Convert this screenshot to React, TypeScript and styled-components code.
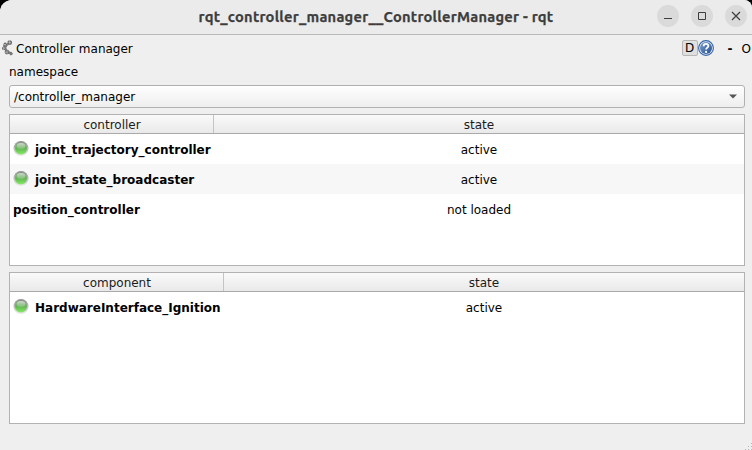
import React from "react";
import styled, { createGlobalStyle } from "styled-components";

const GlobalStyle = createGlobalStyle`
  *, *::before, *::after { box-sizing: border-box; }
  html, body { margin: 0; height: 450px; overflow: hidden; background: #000; }
`;

const Window = styled.div`
  display: flex;
  flex-direction: column;
  width: 752px;
  height: 450px;
  overflow: hidden;
  border-radius: 12px 8px 0 0;
  background: #efefef;
  color: #000;
  font: 12px/14px "DejaVu Sans", sans-serif;
  white-space: nowrap;
`;

const TitleBar = styled.header`
  display: grid;
  grid-template-columns: 1fr 356px 1fr;
  align-items: center;
  height: 35px;
  flex: none;
  background: #ebebeb;
  border-bottom: 1px solid #b9bab7;
`;

const WindowTitle = styled.h1`
  grid-column: 2;
  margin: 0;
  color: #3d3d3d;
  font: 700 14.67px/20px Ubuntu, "Noto Sans", sans-serif;
  letter-spacing: 0.24px;
  text-align: center;
  -webkit-text-stroke: 0.25px #3d3d3d;
`;

const WindowButtons = styled.div`
  display: flex;
  justify-content: flex-end;
  gap: 12px;
  padding: 0 5px 2px 0;
`;

const RoundButton = styled.button`
  display: grid;
  place-items: center;
  width: 22px;
  height: 22px;
  padding: 0;
  border: 0;
  border-radius: 50%;
  background: #dadada;
`;

const DockBar = styled.div`
  display: flex;
  align-items: center;
  height: 26px;
  flex: none;
  padding: 0 1px;
`;

const DockTitle = styled.span`
  flex: 1;
  padding: 1px 0 0 2px;
`;

const DockButton = styled.button`
  width: 16px;
  height: 16px;
  padding: 0;
  border: 1px solid #b6b6b6;
  border-radius: 2px;
  background: linear-gradient(#e2e2e2, #dedede);
  color: #000;
  font: 12px/14px "DejaVu Sans", sans-serif;
`;

const FlatButton = styled.span<{ $gap: number; $bold?: boolean }>`
  margin-left: ${(p) => p.$gap}px;
  padding-top: 1px;
  font-weight: ${(p) => (p.$bold ? 700 : 400)};
`;

const Content = styled.main`
  display: flex;
  flex-direction: column;
  padding: 4px 7px 0 9px;
`;

const Label = styled.label`
  height: 20px;
`;

const ComboBox = styled.div`
  display: flex;
  align-items: center;
  justify-content: space-between;
  height: 23px;
  padding: 0 7px 0 4px;
  border: 1px solid #b1b1b1;
  border-radius: 3px;
  background: linear-gradient(#fefefe, #eeeeee);
`;

const Table = styled.section<{ $first: number; $gap: number }>`
  --columns: ${(p) => p.$first}px 1fr;
  height: 152px;
  margin-top: ${(p) => p.$gap}px;
  border: 1px solid #b2b2b2;
  background: #fff;
`;

const HeaderRow = styled.div`
  display: grid;
  grid-template-columns: var(--columns);
  height: 19px;
  border-bottom: 1px solid #aaaaaa;
  background: linear-gradient(#fafafa, #e9e9e9);
  color: #1b1b1b;
`;

const HeaderCell = styled.div`
  padding-top: 3px;
  line-height: 14px;
  text-align: center;

  &:first-child {
    padding-left: 1px;
    border-right: 1px solid #c4c4c4;
  }
`;

const Row = styled.div<{ $shaded: boolean }>`
  display: grid;
  grid-template-columns: var(--columns);
  align-items: center;
  height: 30px;
  background: ${(p) => (p.$shaded ? "#f7f7f7" : "#fff")};
`;

const NameCell = styled.div`
  display: flex;
  align-items: center;
  gap: 6px;
  padding: 1px 0 0 3px;
  font-weight: 700;
`;

const StateCell = styled.div`
  padding-top: 1px;
  text-align: center;
`;

const LedSvg = styled.svg`
  flex: none;
  margin: -2px 0 -1px;
`;

const Footer = styled.footer`
  display: flex;
  flex: 1;
  align-items: flex-end;
  justify-content: flex-end;
`;

const Led = () => (
  <LedSvg width="16" height="16" viewBox="0 0 16 16">
    <defs>
      <linearGradient id="ring" x2="0" y2="1">
        <stop stopColor="#8d8d8d" />
        <stop offset="1" stopColor="#ececec" />
      </linearGradient>
      <linearGradient id="lamp" x2="0" y2="1">
        <stop stopColor="#71966d" />
        <stop offset=".5" stopColor="#62b653" />
        <stop offset="1" stopColor="#83ed60" />
      </linearGradient>
      <linearGradient id="shine" x2="0" y2="1">
        <stop stopColor="#e0e8df" stopOpacity=".85" />
        <stop offset="1" stopColor="#b4d8ad" stopOpacity=".35" />
      </linearGradient>
    </defs>
    <circle cx="8" cy="7.5" r="7.5" fill="url(#ring)" />
    <circle cx="8" cy="7.5" r="5.9" fill="url(#lamp)" />
    <ellipse cx="8" cy="5" rx="4.5" ry="3" fill="url(#shine)" />
  </LedSvg>
);

const Gears = () => (
  <svg width="13" height="16" viewBox="0 0 13 16" fill="none">
    <path d="M9.5 2.7 5.2 4.9 4 8.1l2.2 3.7 4.2 1.8" stroke="#8a8a8a" strokeWidth="2.4" />
    <g stroke="#707070" strokeWidth="1.7" strokeDasharray="2 .35">
      <circle cx="8.7" cy="2.6" r="1.6" />
      <circle cx="4.3" cy="4.8" r="1.4" />
      <circle cx="3.1" cy="8.2" r="1.3" />
      <circle cx="6" cy="12.1" r="1.6" />
      <circle cx="10" cy="13.6" r=".9" />
    </g>
    <g fill="#b5b5b5">
      <circle cx="8.7" cy="2.6" r=".9" />
      <circle cx="4.3" cy="4.8" r=".7" />
      <circle cx="3.1" cy="8.2" r=".7" />
      <circle cx="6" cy="12.1" r=".8" />
    </g>
  </svg>
);

const Help = () => (
  <svg width="16" height="16" viewBox="0 0 16 16">
    <defs>
      <linearGradient id="help" x2="1" y2="1">
        <stop stopColor="#7f9fcb" />
        <stop offset="1" stopColor="#244f91" />
      </linearGradient>
    </defs>
    <circle cx="8" cy="8" r="7.4" fill="#e2ebf6" stroke="#3465a4" strokeWidth="1.1" />
    <circle cx="8" cy="8" r="6" fill="url(#help)" />
    <path d="M5.6 6.2C5.7 3.2 10.6 3.3 10.4 6c-.1 1.6-2.3 1.7-2.3 3.6" fill="none" stroke="#fff" strokeWidth="1.8" />
    <circle cx="8.1" cy="11.9" r="1.1" fill="#fff" />
  </svg>
);

type Entry = { name: string; state: string; led?: boolean };
type StatusProps = { heading: string; first: number; gap: number; entries: Entry[] };

const StatusTable = ({ heading, first, gap, entries }: StatusProps) => (
  <Table $first={first} $gap={gap}>
    <HeaderRow>
      <HeaderCell>{heading}</HeaderCell>
      <HeaderCell>state</HeaderCell>
    </HeaderRow>
    {entries.map((entry, i) => (
      <Row key={entry.name} $shaded={i % 2 === 1}>
        <NameCell>
          {entry.led && <Led />}
          {entry.name}
        </NameCell>
        <StateCell>{entry.state}</StateCell>
      </Row>
    ))}
  </Table>
);

const controllers: Entry[] = [
  { name: "joint_trajectory_controller", state: "active", led: true },
  { name: "joint_state_broadcaster", state: "active", led: true },
  { name: "position_controller", state: "not loaded" },
];

const components: Entry[] = [
  { name: "HardwareInterface_Ignition", state: "active", led: true },
];

export default function App() {
  return (
    <>
      <GlobalStyle />
      <Window>
        <TitleBar>
          <WindowTitle>rqt_controller_manager__ControllerManager - rqt</WindowTitle>
          <WindowButtons>
            <RoundButton aria-label="Minimize">
              <svg width="10" height="10"><path d="M1 7.5h8" stroke="#3d3d3d" /></svg>
            </RoundButton>
            <RoundButton aria-label="Maximize">
              <svg width="10" height="10"><path d="M1.5 1.5h7v7h-7z" fill="none" stroke="#3d3d3d" /></svg>
            </RoundButton>
            <RoundButton aria-label="Close">
              <svg width="10" height="10"><path d="m1 1 8 8M9 1 1 9" stroke="#3d3d3d" strokeWidth="1.2" /></svg>
            </RoundButton>
          </WindowButtons>
        </TitleBar>
        <DockBar>
          <Gears />
          <DockTitle>Controller manager</DockTitle>
          <DockButton>D</DockButton>
          <Help />
          <FlatButton $gap={14} $bold>-</FlatButton>
          <FlatButton $gap={9}>O</FlatButton>
        </DockBar>
        <Content>
          <Label>namespace</Label>
          <ComboBox>
            <span>/controller_manager</span>
            <svg width="8" height="5"><path d="M0 .5h8L4 4.5z" fill="#555" /></svg>
          </ComboBox>
          <StatusTable heading="controller" first={204} gap={6} entries={controllers} />
          <StatusTable heading="component" first={214} gap={6} entries={components} />
        </Content>
        <Footer>
          <svg width="8" height="8" fill="#b7b7b7">
            <path d="M7 1h1v1H7zM7 4h1v1H7zM4 4h1v1H4zM7 7h1v1H7zM4 7h1v1H4zM1 7h1v1H1z" />
          </svg>
        </Footer>
      </Window>
    </>
  );
}
